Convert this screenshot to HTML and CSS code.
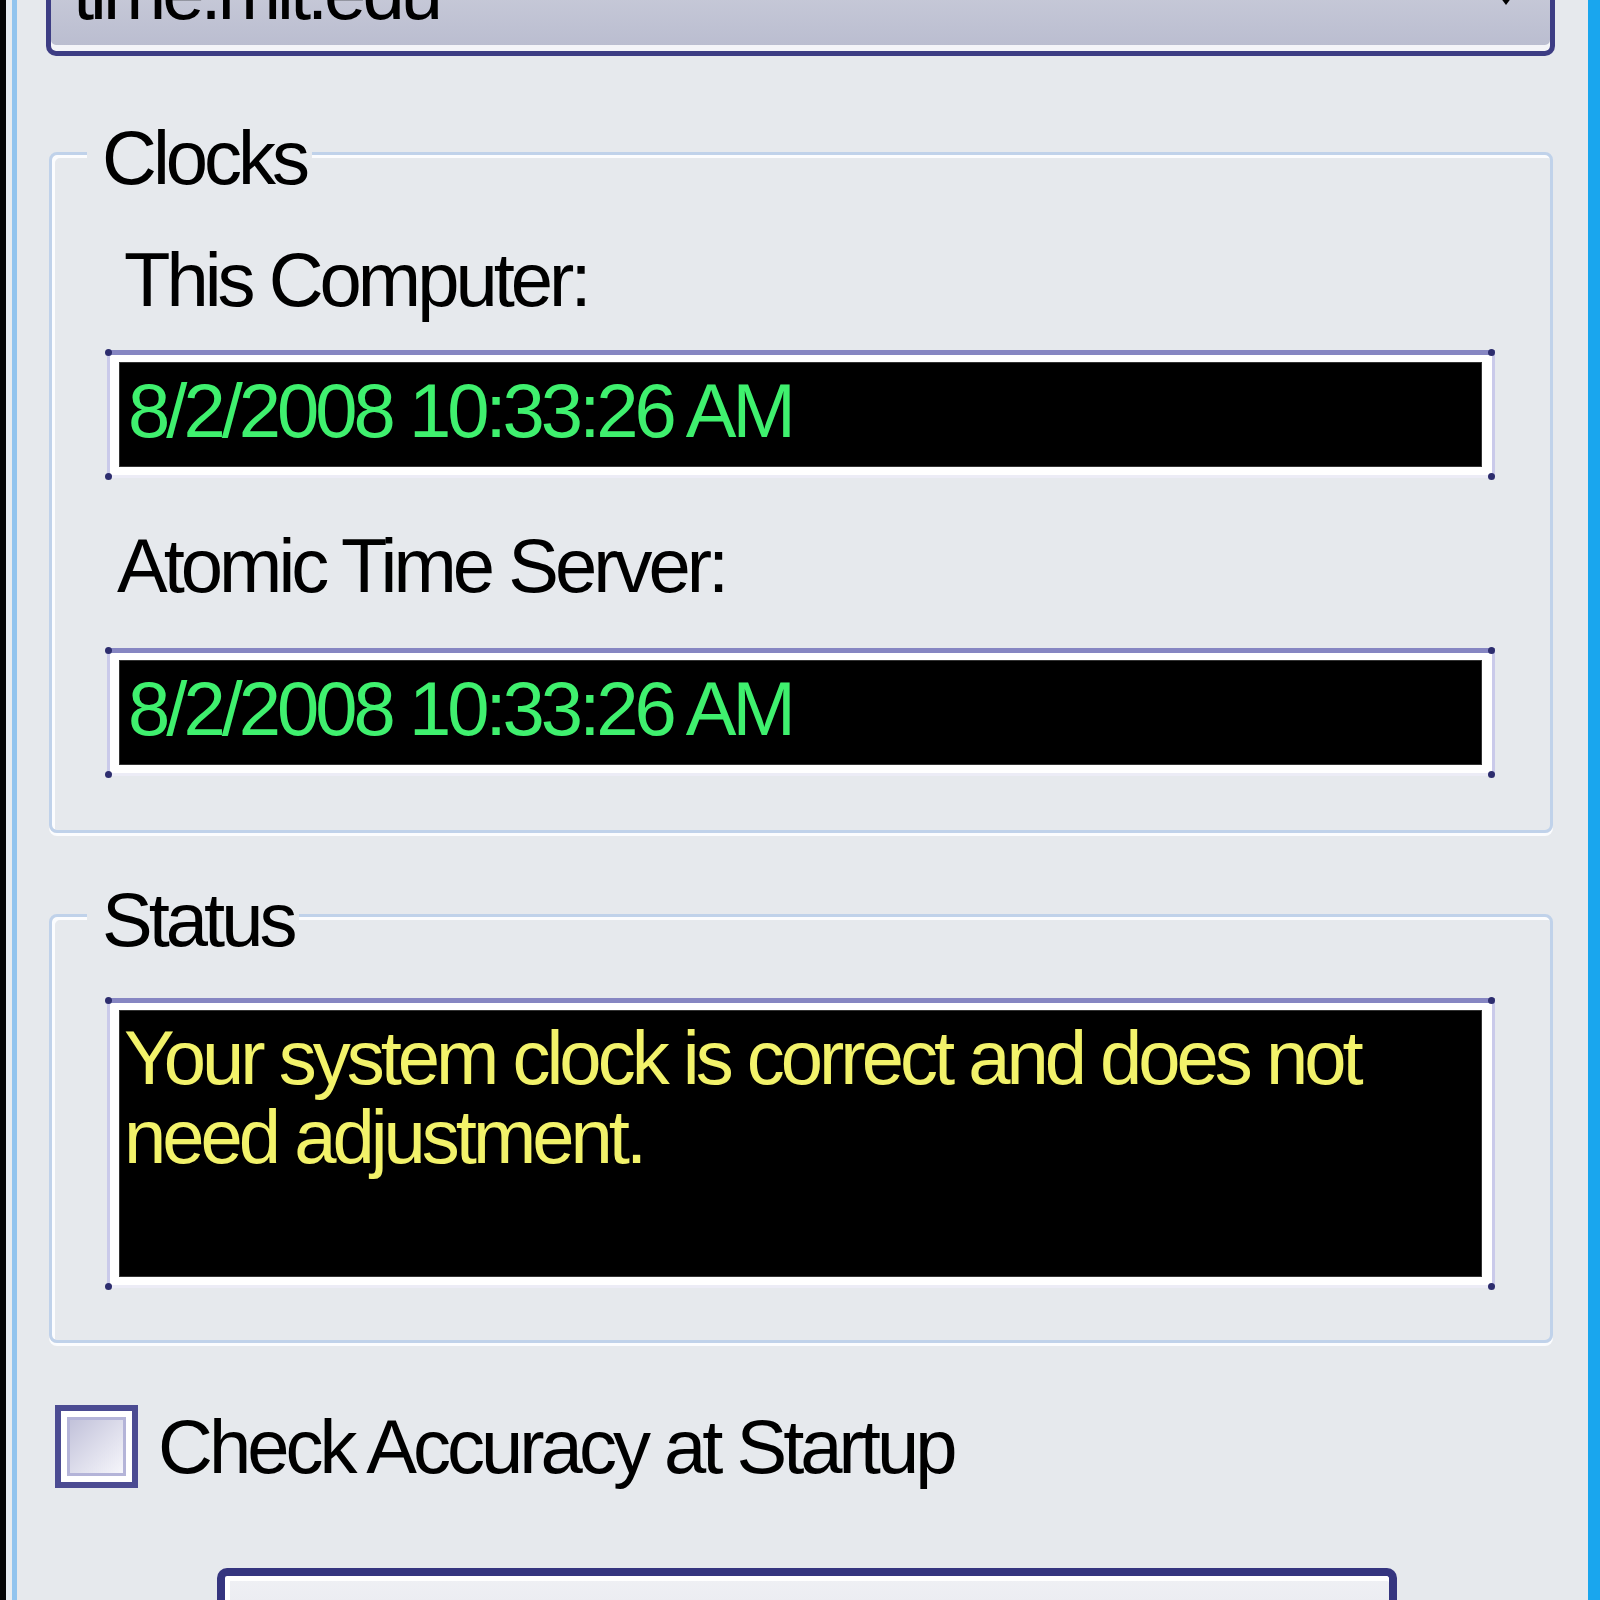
FILE: index.html
```html
<!DOCTYPE html>
<html lang="en">
<head>
<meta charset="utf-8">
<title>Atomic Clock Sync</title>
<link rel="stylesheet" href="styles.css">
</head>
<body>
<div class="window">
  <div class="client">
    <div class="combo">
      <span class="combo-text">time.mit.edu</span>
      <span class="combo-arrow"></span>
    </div>

    <fieldset class="group group-clocks">
      <legend>Clocks</legend>
      <div class="label label-this">This Computer:</div>
      <div class="lcd lcd-time"><div class="lcd-screen time">8/2/2008 10:33:26 AM</div></div>
      <div class="label label-atomic">Atomic Time Server:</div>
      <div class="lcd lcd-time"><div class="lcd-screen time">8/2/2008 10:33:26 AM</div></div>
    </fieldset>

    <fieldset class="group group-status">
      <legend>Status</legend>
      <div class="lcd lcd-status"><div class="lcd-screen status">Your system clock is correct and does not need adjustment.</div></div>
    </fieldset>

    <label class="check-row">
      <span class="checkbox"><span class="checkbox-inner"></span></span>
      <span class="check-label">Check Accuracy at Startup</span>
    </label>

    <div class="button"></div>
  </div>
</div>
</body>
</html>
```
FILE: styles.css
```css
html, body {
  margin: 0;
  padding: 0;
  overflow: hidden;
  background: #e6e9ed;
}

body {
  font-family: "Liberation Sans", Arial, sans-serif;
  font-size: 76px;
  letter-spacing: -4px;
  color: #000;
}

.window {
  height: 1600px;
  display: flex;
  border-left: 6px solid #050505;
  border-right: 12px solid #19a6ee;
  padding-left: 6px;
  background: #e8ecf0;
  overflow: hidden;
}

.client {
  flex: 1;
  border-left: 5px solid #92c4ee;
  background: #e6e9ed;
  display: flex;
  flex-direction: column;
  align-items: flex-start;
  min-width: 0;
}

.client > * {
  flex-shrink: 0;
}

/* combo box (only its lower part is visible) */
.combo {
  box-sizing: border-box;
  margin: -52px 33px 0 29px;
  align-self: stretch;
  height: 108px;
  border: 5px solid #3d3d84;
  border-radius: 0 0 10px 10px;
  background: linear-gradient(#d0d2de, #b9bccf);
  box-shadow: inset 0 -6px 0 #f3f4f8;
  display: flex;
  justify-content: space-between;
  align-items: flex-start;
  padding: 0 35px 0 22px;
  line-height: 80px;
}

.combo-arrow {
  margin-top: 40px;
  width: 0;
  height: 0;
  border-left: 9px solid transparent;
  border-right: 9px solid transparent;
  border-top: 12px solid #000;
}

/* group boxes */
.group {
  box-sizing: border-box;
  margin: 62px 35px 0 32px;
  align-self: stretch;
  min-inline-size: 0;
  border: 3px solid #c0d2ea;
  border-radius: 8px;
  box-shadow: inset 3px 3px 0 #fbfcfe, 0 3px 0 #fbfcfe;
  padding: 52px 55px 54px 55px;
}

.group legend {
  font-size: 76px;
  line-height: 60px;
  padding: 10px 6px 0 15px;
  margin-left: -20px;
  background: #e6e9ed;
}

.group-status {
  margin-top: 47px;
  padding: 48px 55px 52px 55px;
}

.label {
  line-height: 80px;
  white-space: nowrap;
}

.label-this { margin-left: 17px; }

.label-atomic {
  margin-left: 10px;
  margin-top: 48px;
}

/* LCD display frames */
.lcd {
  position: relative;
  box-sizing: border-box;
  border-top: 5px solid #8686c2;
  border-left: 3px solid #cacaea;
  border-right: 3px solid #cacaea;
  border-bottom: 3px solid #ececf6;
  background: #fff;
  padding: 7px 10px 8px 9px;
}

.lcd::before,
.lcd::after {
  content: "";
  position: absolute;
  left: -5px;
  width: 7px;
  height: 7px;
  border-radius: 50%;
  background: #2d2d6e;
  box-shadow: 1383px 0 0 #2d2d6e;
}

.lcd::before { top: -6px; }
.lcd::after { bottom: -5px; }

.lcd-time {
  height: 128px;
  margin-top: 30px;
}

.label-atomic + .lcd-time { margin-top: 42px; }

.lcd-status { height: 290px; }

.lcd-screen {
  box-sizing: border-box;
  height: 100%;
  background: #000;
  box-shadow: inset 0 0 0 1px #333;
}

.time {
  color: #3ff06e;
  line-height: 97px;
  padding-left: 9px;
  white-space: nowrap;
}

.status {
  color: #f2f26a;
  line-height: 79px;
  padding: 8px 100px 0 5px;
}

/* checkbox */
.check-row {
  margin-top: 62px;
  display: flex;
  align-items: center;
}

.checkbox {
  box-sizing: border-box;
  width: 83px;
  height: 83px;
  margin-left: 38px;
  border: 6px solid #4b4b92;
  background: #fff;
  padding: 6px;
  display: block;
}

.checkbox-inner {
  display: block;
  box-sizing: border-box;
  height: 100%;
  border: 3px solid #b4b4d8;
  background: linear-gradient(135deg, #c2c2da, #f6f6fb);
}

.check-label {
  margin-left: 20px;
  line-height: 80px;
  white-space: nowrap;
}

/* push button (top edge only visible) */
.button {
  box-sizing: border-box;
  margin: 80px 0 0 200px;
  width: 1180px;
  height: 140px;
  border: 8px solid #35357f;
  border-bottom: none;
  border-radius: 10px 10px 0 0;
  background: linear-gradient(#eff0f4, #dfe1ea);
  box-shadow: inset 0 5px 0 #fff, inset 5px 0 0 #fff;
}
```
